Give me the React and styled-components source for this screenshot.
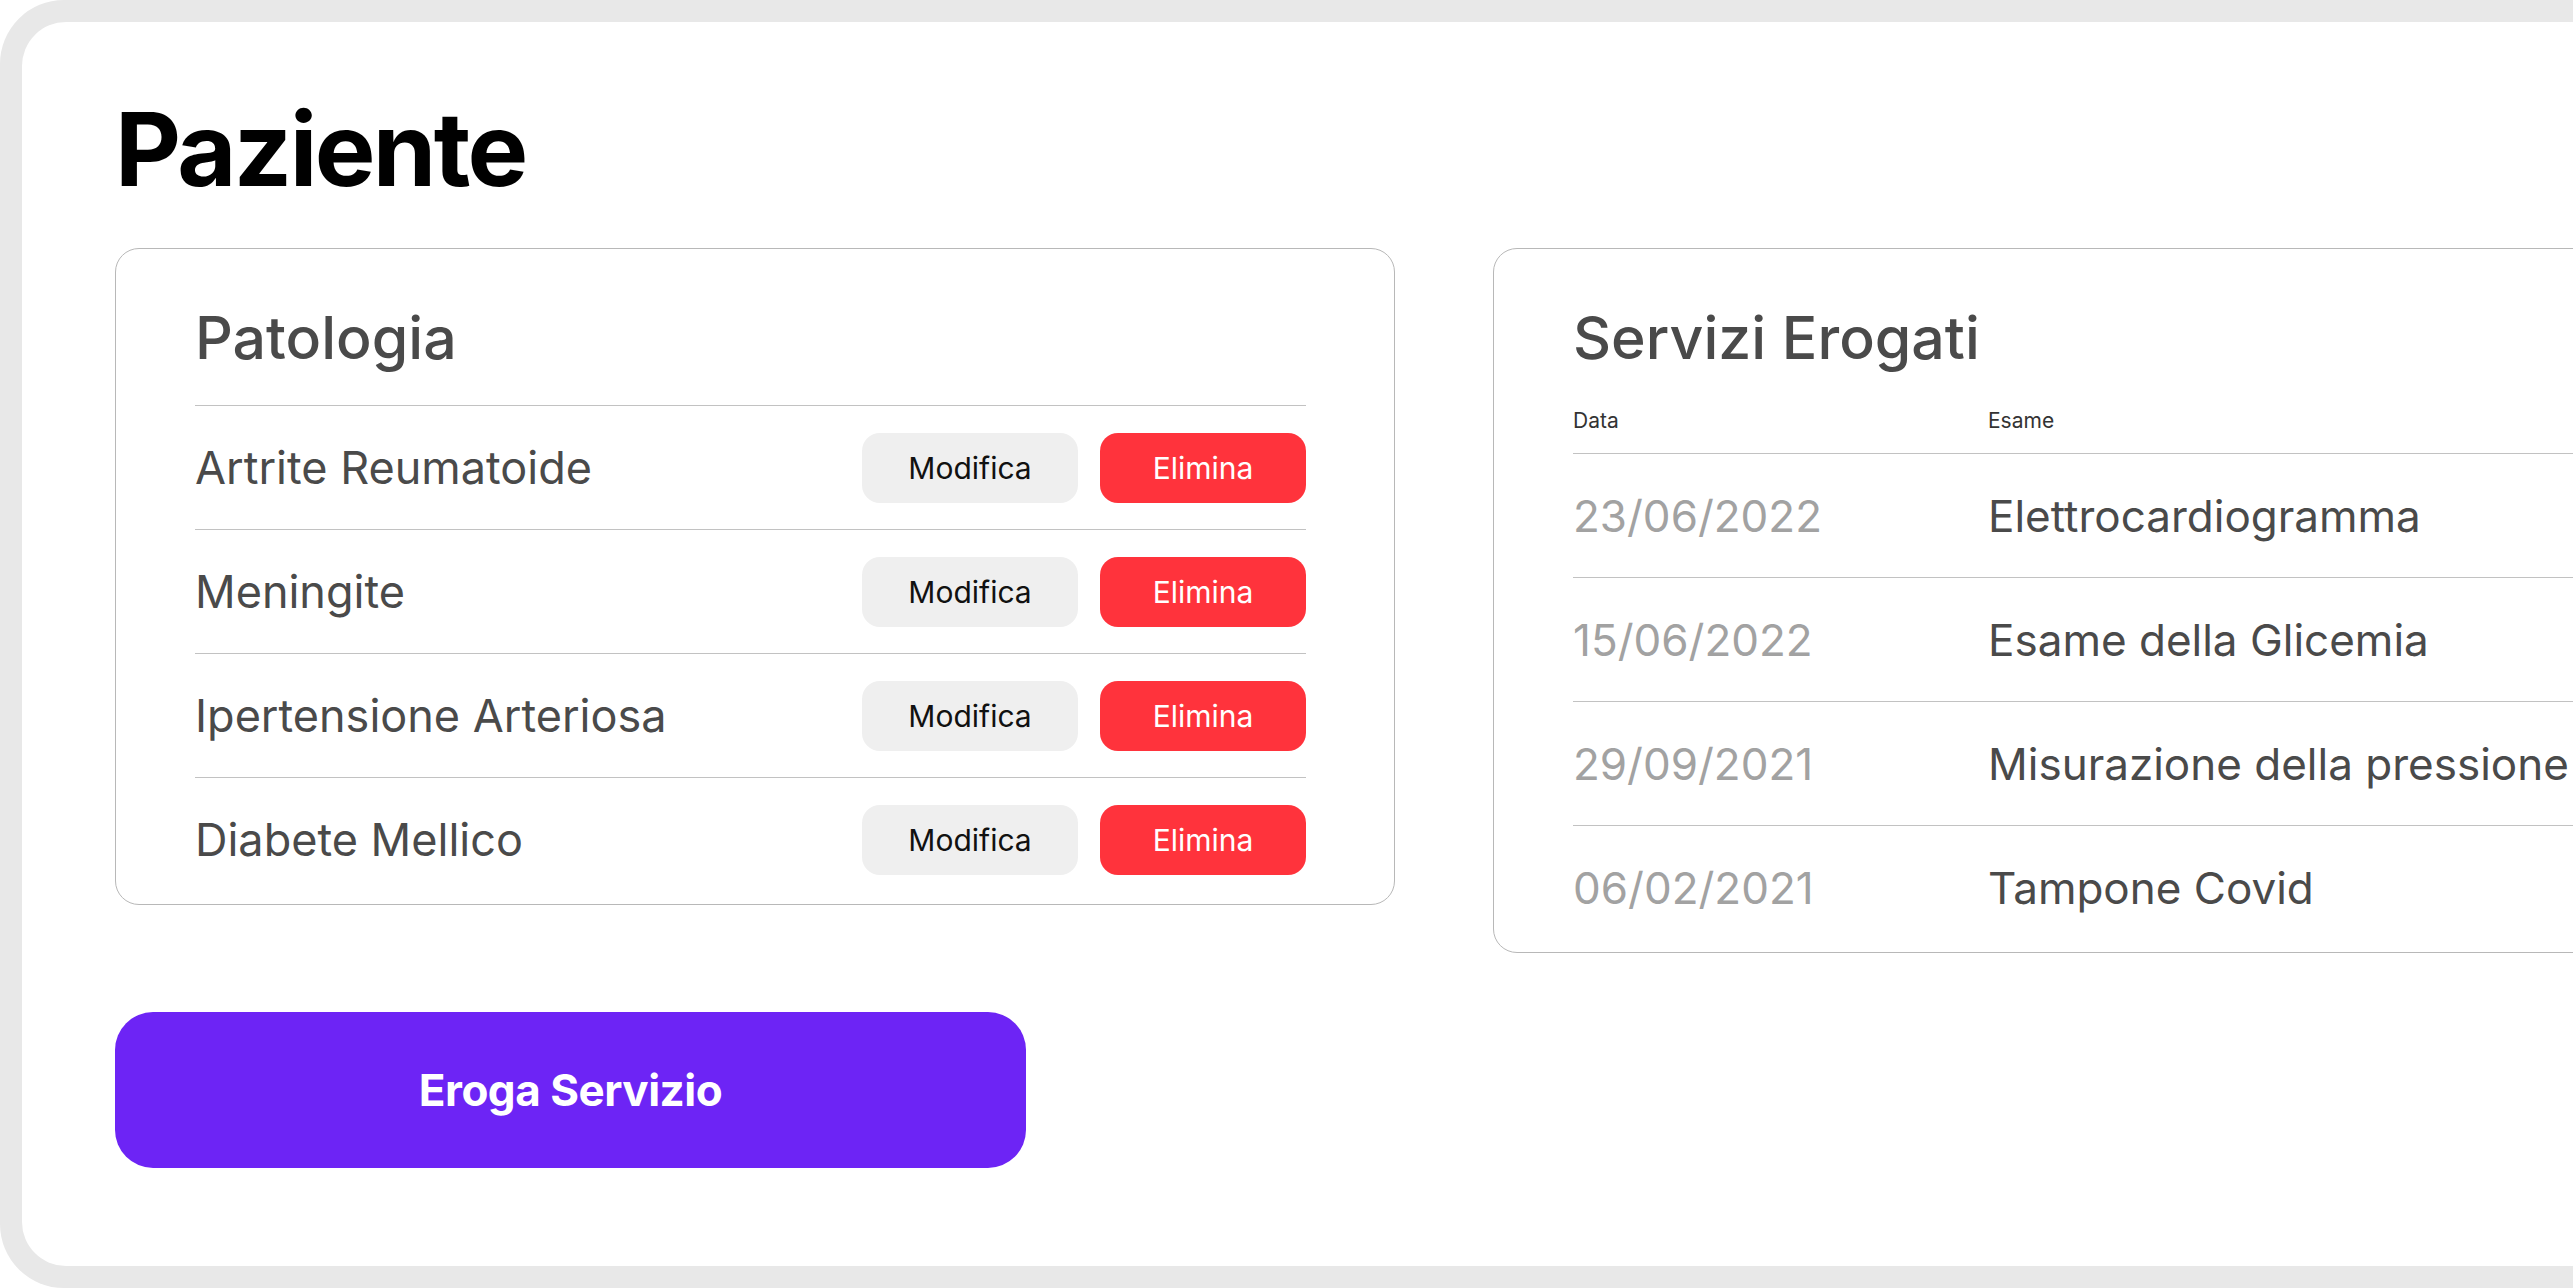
import React from "react";
import styled, { createGlobalStyle } from "styled-components";

const GlobalStyle = createGlobalStyle`
    body {
        margin: 0;
        overflow: hidden;
        background: #ffffff;
        font-family: Inter, "Noto Sans", sans-serif;
    }
`;

const Frame = styled.div`
    width: 2720px;
    height: 1288px;
    box-sizing: border-box;
    padding: 22px;
    background: #e8e8e8;
    border-radius: 64px;
`;

const Panel = styled.div`
    height: 100%;
    box-sizing: border-box;
    padding: 76px 0 0 93px;
    background: #ffffff;
    border-radius: 44px;
`;

const PageTitle = styled.h1`
    margin: 0 0 48px;
    font-size: 102px;
    line-height: 1;
    font-weight: 700;
    color: #000000;
    letter-spacing: -2.6px;
`;

const Columns = styled.div`
    display: flex;
    align-items: flex-start;
    gap: 98px;
`;

const LeftColumn = styled.div`
    display: flex;
    flex-direction: column;
    align-items: flex-start;
    gap: 107px;
`;

const Card = styled.section`
    width: ${(props) => props.width}px;
    box-sizing: border-box;
    padding: 0 88px 3px 79px;
    border: 1.5px solid #b8b8b8;
    border-radius: 24px;
    background: #ffffff;
    flex-shrink: 0;
`;

const CardTitle = styled.h2`
    margin: 0;
    padding-top: 59px;
    padding-bottom: ${(props) => props.gap}px;
    font-size: 59px;
    line-height: 1;
    font-weight: 500;
    color: #4a4a4a;
`;

const Row = styled.div`
    display: flex;
    align-items: center;
    height: 124px;
    box-sizing: border-box;
    border-top: 1.5px solid #c2c2c2;
`;

const RowLabel = styled.span`
    flex: 1;
    font-size: 45px;
    color: #4a4a4a;
`;

const Actions = styled.div`
    display: flex;
    gap: 22px;
`;

const SmallButton = styled.button`
    height: 70px;
    width: ${(props) => (props.danger ? 206 : 216)}px;
    border: none;
    border-radius: 18px;
    font-family: inherit;
    font-size: 30px;
    background: ${(props) => (props.danger ? "#ff333c" : "#efefef")};
    color: ${(props) => (props.danger ? "#ffffff" : "#111111")};
`;

const MainButton = styled.button`
    width: 911px;
    height: 156px;
    border: none;
    border-radius: 38px;
    background: #6d24f5;
    color: #ffffff;
    font-family: inherit;
    font-size: 44px;
    font-weight: 700;
    letter-spacing: -0.5px;
`;

const HeaderRow = styled.div`
    display: flex;
    padding-bottom: 22px;
    font-size: 21px;
    line-height: 1;
    color: #333333;
`;

const Col = styled.span`
    width: ${(props) => props.width}px;
    flex-shrink: 0;
`;

const DataRow = styled(Row)`
    font-size: 44px;
`;

const DateCell = styled(Col)`
    color: #a2a2a2;
`;

const ExamCell = styled.span`
    color: #4a4a4a;
    white-space: nowrap;
`;

const patologie = [
    "Artrite Reumatoide",
    "Meningite",
    "Ipertensione Arteriosa",
    "Diabete Mellico",
];

const servizi = [
    { data: "23/06/2022", esame: "Elettrocardiogramma" },
    { data: "15/06/2022", esame: "Esame della Glicemia" },
    { data: "29/09/2021", esame: "Misurazione della pressione" },
    { data: "06/02/2021", esame: "Tampone Covid" },
];

const App = () => {
    return (
        <>
            <GlobalStyle />
            <Frame>
                <Panel>
                    <PageTitle>Paziente</PageTitle>
                    <Columns>
                        <LeftColumn>
                            <Card width={1280}>
                                <CardTitle gap={38}>Patologia</CardTitle>
                                {patologie.map((nome) => (
                                    <Row key={nome}>
                                        <RowLabel>{nome}</RowLabel>
                                        <Actions>
                                            <SmallButton>Modifica</SmallButton>
                                            <SmallButton danger>Elimina</SmallButton>
                                        </Actions>
                                    </Row>
                                ))}
                            </Card>
                            <MainButton>Eroga Servizio</MainButton>
                        </LeftColumn>
                        <Card width={1400}>
                            <CardTitle gap={43}>Servizi Erogati</CardTitle>
                            <HeaderRow>
                                <Col width={415}>Data</Col>
                                <Col width={300}>Esame</Col>
                            </HeaderRow>
                            {servizi.map((s) => (
                                <DataRow key={s.data}>
                                    <DateCell width={415}>{s.data}</DateCell>
                                    <ExamCell>{s.esame}</ExamCell>
                                </DataRow>
                            ))}
                        </Card>
                    </Columns>
                </Panel>
            </Frame>
        </>
    );
};

export default App;
